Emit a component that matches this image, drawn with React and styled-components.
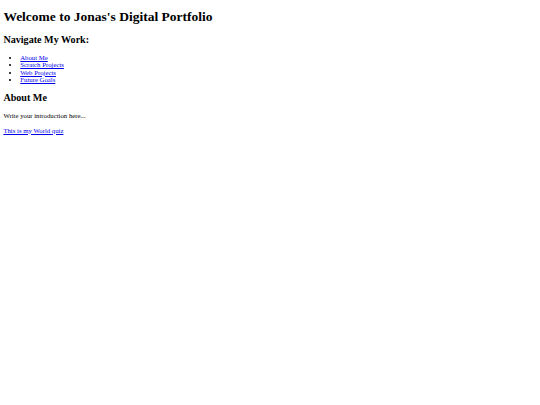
import React from 'react';
import styled, { createGlobalStyle } from 'styled-components';

// the reference is a default-styled page at 1280px shrunk to 540px wide
const GlobalStyle = createGlobalStyle`
  html, body {
    margin: 0;
    background: #fff;
  }
`;

const Page = styled.div`
  margin: 3.375px;
  font-family: "Liberation Serif", "Times New Roman", serif;
  font-size: 6.75px;
  line-height: 7.6px;
  color: #000;
`;

const Title = styled.h1`
  font-size: 13.5px;
  line-height: 15.5px;
  font-weight: bold;
  margin: 9.045px 0;
`;

const Heading = styled.h2`
  font-size: 10.125px;
  line-height: 11.6px;
  font-weight: bold;
  margin: 8.404px 0;
`;

const NavList = styled.ul`
  list-style: disc;
  margin: 6.75px 0;
  padding-left: 16.875px;
`;

const NavItem = styled.li``;

const Link = styled.a`
  color: #0000ee;
  text-decoration: underline;
`;

const Paragraph = styled.p`
  margin: 6.75px 0;
`;

const sections = ['About Me', 'Scratch Projects', 'Web Projects', 'Future Goals'];

const App = () => (
  <>
    <GlobalStyle />
    <Page>
      <Title>Welcome to Jonas's Digital Portfolio</Title>
      <Heading>Navigate My Work:</Heading>
      <NavList>
        {sections.map((name) => (
          <NavItem key={name}>
            <Link href="#">{name}</Link>
          </NavItem>
        ))}
      </NavList>
      <Heading>About Me</Heading>
      <Paragraph>Write your introduction here...</Paragraph>
      <Link href="#">This is my World quiz</Link>
    </Page>
  </>
);

export default App;
